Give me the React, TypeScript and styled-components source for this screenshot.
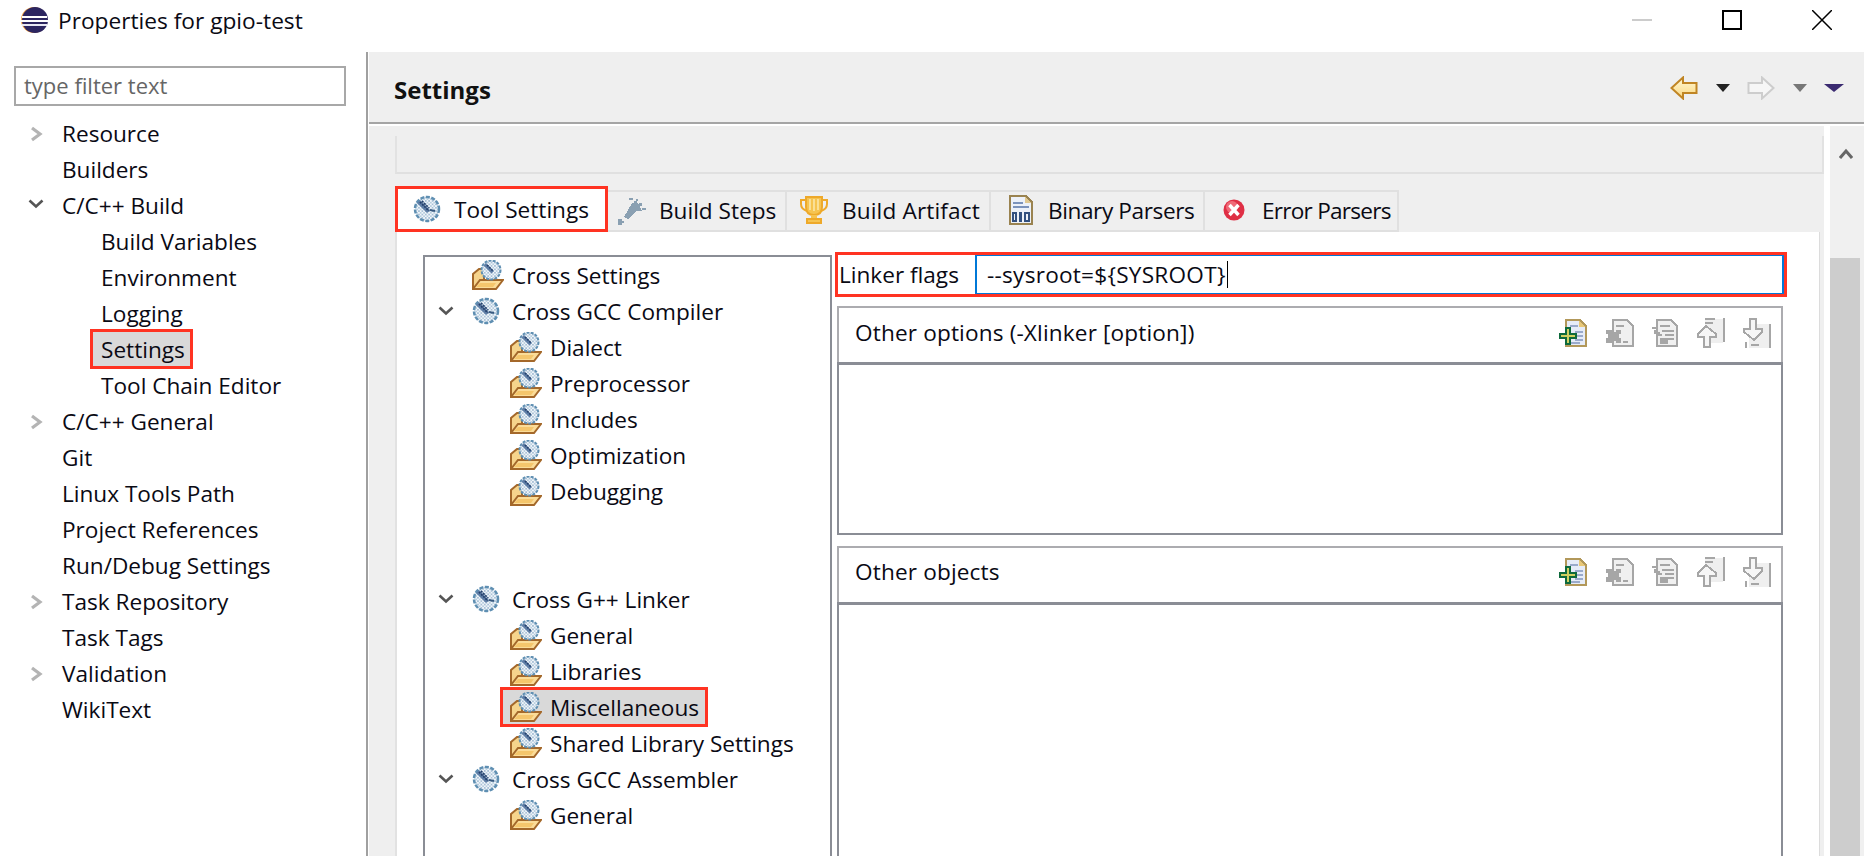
import React from 'react';
import styled, { createGlobalStyle } from 'styled-components';

const Global = createGlobalStyle`
  html, body { margin: 0; padding: 0; background: #fff; }
  body { font-family: "Open Sans", "Noto Sans", sans-serif; font-size: 22.6px; color: #0a0a14; }
  svg { flex: none; }
`;
const RED = '#ff3322';

const Page = styled.div`width:1864px;height:856px;overflow:hidden;display:flex;flex-direction:column;background:#fff;`;
const TitleBar = styled.div`height:52px;flex:none;display:flex;align-items:center;padding:0 32px 12px 20px;box-sizing:border-box;`;
const TitleText = styled.span`margin-left:10px;font-size:22.7px;`;
const WindowButtons = styled.div`margin-left:auto;display:flex;align-items:center;gap:70px;`;
const Body = styled.div`flex:1;display:flex;min-height:0;`;
const Sidebar = styled.aside`width:366px;flex:none;box-sizing:border-box;padding:14px 20px 0 14px;`;
const Divider = styled.div`width:2px;flex:none;background:#a0a0a0;margin-right:1px;`;
const Filter = styled.div`height:40px;box-sizing:border-box;border:2px solid #a8a8a8;color:#666;padding:0 0 2px 8px;display:flex;align-items:center;margin-bottom:9px;font-size:22px;`;
const Row = styled.div<{ $indent: number }>`
  height:36px;display:flex;align-items:center;white-space:nowrap;padding-left:${p => p.$indent}px;position:relative;
`;
const Twisty = styled.span`position:absolute;display:flex;`;
const Chevron = styled(Twisty)<{ $left: number }>`left:${p => p.$left}px;top:11px;`;
const Mark = styled.span<{ $on?: boolean }>`
  display:inline-flex;align-items:center;
  ${p => p.$on && `height:40px;background:#d9d9d9;border:3px solid ${RED};box-sizing:border-box;margin:-2px 0 -2px -11px;padding:0 5px 0 8px;`}
`;
const Main = styled.main`flex:1;min-width:0;display:flex;flex-direction:column;background:#efefef;`;
const Header = styled.header`height:70px;flex:none;box-sizing:border-box;display:flex;align-items:center;padding:2px 20px 0 25px;`;
const HeaderTitle = styled.h1`margin:3px 0 0;font-size:24px;font-weight:700;color:#111;`;
const Nav = styled.div`margin-left:auto;display:flex;align-items:center;gap:17.5px;`;
const Rule = styled.div`height:2px;flex:none;background:#a5a5a5;`;
const WhiteRule = styled.div`height:2px;flex:none;background:#fff;`;
const Workspace = styled.div`flex:1;min-height:0;display:flex;`;
const Pages = styled.div`width:1455px;flex:none;display:flex;flex-direction:column;padding:10px 0 0 26px;box-sizing:border-box;`;
const Strip = styled.div`height:38px;flex:none;box-sizing:border-box;border-left:2px solid #e2e2e2;border-bottom:2px solid #e0e0e0;border-right:2px solid #e2e2e2;margin-bottom:12px;`;
const TabBar = styled.div`height:46px;flex:none;display:flex;margin-right:4px;`;
const Tab = styled.div<{ $w: number; $pad: number; $gap: number; $ls?: number; $sel?: boolean }>`
  width:${p => p.$w}px;flex:none;box-sizing:border-box;display:flex;align-items:center;white-space:nowrap;
  padding-left:${p => p.$pad}px;gap:${p => p.$gap}px;letter-spacing:${p => p.$ls ?? 0}px;
  ${p => p.$sel
    ? `background:#fff;border:3px solid ${RED};`
    : `margin-top:4px;padding-bottom:2px;background:#efefef;border-top:2px solid #e0e0e0;border-bottom:2px solid #e0e0e0;border-right:2px solid #e0e0e0;`}
`;
const TabRest = styled.div`flex:1;`;
const Folder = styled.div`flex:1;min-height:0;display:flex;margin-right:4px;background:#fff;border-left:2px solid #e2e2e2;border-right:1px solid #dcdcdc;padding:20px 0 0 26px;box-sizing:border-box;`;
const TreeBox = styled.div`width:409px;flex:none;box-sizing:border-box;margin-top:3px;border:2px solid #8a8d95;border-bottom:0;`;
const TreeRow = styled.div<{ $level: number }>`height:36px;display:flex;align-items:center;white-space:nowrap;padding-left:${p => (p.$level === 2 ? 85 : 13)}px;position:relative;`;
const TreeTwist = styled.span<{ $x: number }>`width:${p => p.$x}px;flex:none;display:flex;align-items:center;`;
const TreeSpacer = styled.div`height:72px;`;
const Selected = styled.span<{ $on?: boolean }>`
  display:inline-flex;align-items:center;
  ${p => p.$on && `background:#d9d9d9;border:3px solid ${RED};box-sizing:border-box;height:40px;padding:0 6px 0 7px;margin:0 -9px 0 -10px;`}
`;
const TreeLabel = styled.span<{ $wide?: boolean }>`margin-left:${p => (p.$wide ? 12 : 8)}px;`;
const Form = styled.div`margin-left:3px;width:952px;flex:none;display:flex;flex-direction:column;`;
const LinkerRow = styled.div`height:45px;flex:none;box-sizing:border-box;border:3px solid ${RED};display:flex;`;
const LinkerLabel = styled.label`width:137px;flex:none;display:flex;align-items:center;padding-left:1px;box-sizing:border-box;`;
const LinkerInput = styled.div`flex:1;box-sizing:border-box;border:1px solid #0078d7;border-left-width:2px;border-right-width:2px;display:flex;align-items:center;padding-left:10px;letter-spacing:0.25px;`;
const Caret = styled.span`display:inline-block;width:1px;height:27px;background:#000;margin-left:1px;`;
const Section = styled.section<{ $top: number }>`margin:${p => p.$top}px 4px 0 2px;display:flex;flex-direction:column;`;
const SectionHead = styled.div<{ $h: number; $pb: number }>`height:${p => p.$h}px;box-sizing:border-box;border:2px solid #acacb0;border-bottom:0;display:flex;align-items:center;padding:0 10px ${p => p.$pb}px 16px;letter-spacing:0.15px;`;
const Tools = styled.div`margin-left:auto;display:flex;align-items:center;gap:18.5px;`;
const SectionList = styled.div<{ $h: number }>`height:${p => p.$h}px;box-sizing:border-box;border:2px solid #8a8d95;border-top-width:3px;`;
const Scroll = styled.div`flex:1;background:#fff;display:flex;padding-left:6px;`;
const ScrollTrack = styled.div`width:100%;background:#f0f0f0;display:flex;flex-direction:column;`;
const ScrollUp = styled.div`height:132px;flex:none;padding:10px 0 0 9px;box-sizing:border-box;`;
const ScrollThumb = styled.div`flex:1;width:30px;background:#cdcdcd;`;

const ChevRight = () => <svg width="14" height="16" viewBox="0 0 14 16"><path d="M2 2l8 6-8 6" fill="none" stroke="#b4b4b4" strokeWidth="3.2"/></svg>;
const ChevDown = () => <svg width="16" height="12" viewBox="0 0 16 12"><path d="M1.5 2.5L8 8.5l6.5-6" fill="none" stroke="#555" strokeWidth="2.6"/></svg>;

const Eclipse = () => (
  <svg width="28" height="28" viewBox="0 0 28 28"><circle cx="14" cy="14" r="13" fill="#f0a040"/><circle cx="15" cy="14" r="13" fill="#2c2560"/><rect x="2" y="10" width="25" height="2" fill="#fff"/><rect x="1" y="14" width="27" height="2" fill="#fff"/><rect x="2" y="18" width="25" height="2" fill="#e8e8f4"/></svg>
);
const Dither = ({ id }: { id: string }) => (
  <pattern id={id} width="3.4" height="3.4" patternUnits="userSpaceOnUse"><rect width="3.4" height="3.4" fill="#f2f6fa"/><rect width="1.7" height="1.7" fill="#b8cfe0"/><rect x="1.7" y="1.7" width="1.7" height="1.7" fill="#a8c0d6"/></pattern>
);
const Gear = ({ s = 28, id }: { s?: number; id: string }) => (
  <svg width={s} height={s} viewBox="0 0 28 28">
    <defs><Dither id={id}/></defs>
    <circle cx="14" cy="14" r="12" fill={`url(#${id})`} stroke="#5f8fb2" strokeWidth="2.5" strokeDasharray="4 1.5"/>
    <path d="M7 5l10 10-3 3L4 8z" fill="#5f7ea6"/>
    <path d="M7 7l9 9M9 6l7 7" stroke="#24406c" strokeWidth="1.700" strokeDasharray="2 1"/>
    <path d="M17 15l5 1" stroke="#37597f" strokeWidth="2"/>
  </svg>
);
const FolderGear = ({ id }: { id: string }) => (
  <svg width="32" height="30" viewBox="0 0 32 30">
    <defs><Dither id={id}/></defs>
    <path d="M1 29V14l6-5h5v12z" fill="#f6d48c" stroke="#a4682a" strokeWidth="2"/>
    <path d="M1 29l7-9h23l-7 9z" fill="#fbdc98" stroke="#a4682a" strokeWidth="2"/>
    <path d="M4 27h17l3-4H8z" fill="#f5c66c"/>
    <circle cx="19" cy="10" r="9.5" fill={`url(#${id})`} stroke="#5f8fb2" strokeWidth="2" strokeDasharray="3 1.2"/>
    <path d="M14 3l8 8-2.500 2.500-8-8z" fill="#5f7ea6"/>
    <path d="M15 5l6 6" stroke="#24406c" strokeWidth="1.600" strokeDasharray="2 1"/>
  </svg>
);
const BuildSteps = () => (
  <svg width="30" height="30" viewBox="0 0 30 30" shapeRendering="crispEdges">
    <path d="M2 24h4v2h2v2H6v2H2z" fill="#8aa0b2"/>
    <path d="M8 22l8-14h6l4 8h-6l-8 8z" fill="#8aa0b2"/>
    <path d="M13 3h4v2h-4zM18 6h3v2h-3zM23 8h3v3h-3zM26 13h4v2h-4zM20 4h2v2h-2z" fill="#8aa0b2"/>
  </svg>
);
const Trophy = () => (
  <svg width="30" height="30" viewBox="0 0 30 30">
    <path d="M7 2h16v10c0 5-3 8-8 8s-8-3-8-8z" fill="#f6c451" stroke="#eea92a" strokeWidth="2"/>
    <path d="M7 5H2v4c0 4 3 6 6 7M23 5h5v4c0 4-3 6-6 7" fill="none" stroke="#eea92a" strokeWidth="2"/>
    <path d="M11 4v11M15 4v12M19 4v11" stroke="#fce7a8" strokeWidth="1.600"/>
    <path d="M12 20h6v4h-6z" fill="#f6c451"/><path d="M8 24h14v4H8z" fill="#f6c451" stroke="#eea92a" strokeWidth="2"/>
  </svg>
);
const Binary = () => (
  <svg width="24" height="30" viewBox="0 0 24 30" shapeRendering="crispEdges">
    <path d="M1 1h16l6 6v22H1z" fill="#edf1f8" stroke="#9a8350" strokeWidth="2"/>
    <path d="M16 2v6h6z" fill="#e0c890"/>
    <path d="M4 7h10v2H4zM4 11h16v2H4z" fill="#7c93bb"/>
    <path d="M3 17h5v10H3zM10 17h3v10h-3zM15 17h6v10h-6z" fill="#33507f"/>
    <path d="M5 19h1v6H5zM17 19h2v6h-2z" fill="#edf1f8"/>
  </svg>
);
const ErrorIcon = () => (
  <svg width="22" height="22" viewBox="0 0 22 22"><circle cx="11" cy="11" r="10.500" fill="#df2f45"/><circle cx="9" cy="8" r="6" fill="#ef6a78"/><path d="M6.500 6l9 10M15.500 6l-9 10" stroke="#fff" strokeWidth="3.400"/></svg>
);
const Back = () => (
  <svg width="28" height="24" viewBox="0 0 28 24"><defs><linearGradient id="bk" x1="0" x2="0" y1="0" y2="1"><stop offset="0" stopColor="#fff9d8"/><stop offset="1" stopColor="#fbd77e"/></linearGradient></defs><path d="M1.500 12L13 1.500V7h13.500v10H13v5.500z" fill="url(#bk)" stroke="#c08524" strokeWidth="2"/></svg>
);
const Forward = () => (
  <svg width="28" height="24" viewBox="0 0 28 24"><path d="M26.500 12L15 1.500V7H1.500v10H15v5.500z" fill="#f6f6f6" stroke="#cdcdcd" strokeWidth="2"/></svg>
);
const Drop = ({ c, w = 14 }: { c: string; w?: number }) => <svg width={w} height="8" viewBox={`0 0 ${w} 8`}><path d={`M0 0h${w}L${w / 2} 8z`} fill={c}/></svg>;
const Gray = '#a6a6a6';
const AddIcon = () => (
  <svg width="28" height="28" viewBox="0 0 28 28" shapeRendering="crispEdges">
    <path d="M7 1h14l6 6v20H7z" fill="#e6ecf8" stroke="#b2985a" strokeWidth="2"/><path d="M20 2v6h6z" fill="#e8c878"/>
    <path d="M11 6h8v2h-8zM16 12h8v2h-8zM16 16h8v2h-8zM16 20h8v2h-8zM11 23h10v2H11z" fill="#9aaacb"/>
    <path d="M6 8h6v6h6v6h-6v6H6v-6H0v-6h6z" fill="#0e6a3c"/><path d="M8 10h2v6h6v2h-6v6H8v-6H2v-2h6z" fill="#cfd060"/>
  </svg>
);
const DelIcon = () => (
  <svg width="28" height="28" viewBox="0 0 28 28" shapeRendering="crispEdges">
    <path d="M7 1h14l6 6v20H7z" fill="#f0f0f0" stroke={Gray} strokeWidth="2"/><path d="M10 6h8v2h-8zM17 22h5v2h-5z" fill={Gray}/>
    <path d="M0 11h6v2h4v-2h5v4h-2v4h2v5h-5v-2H6v2H0v-5h2v-4H0z" fill={Gray}/>
  </svg>
);
const EditIcon = () => (
  <svg width="26" height="28" viewBox="0 0 26 28" shapeRendering="crispEdges">
    <path d="M5 1h14l6 6v20H5z" fill="#f0f0f0" stroke={Gray} strokeWidth="2"/><path d="M8 6h10v2H8zM0 8h6v2H0zM10 11h12v2H10zM13 15h9v2h-9zM16 19h6v2h-6zM8 19h8v6H8zM2 11h4v2h2v2h2v2H6v-2H2z" fill={Gray}/>
  </svg>
);
const UpIcon = () => (
  <svg width="28" height="30" viewBox="0 0 28 30" shapeRendering="crispEdges">
    <path d="M8 1h18v24H8z" fill="#efefef"/><path d="M26 0h2v24h-2zM8 0h10v2H8zM8 4h8v2H8z" fill={Gray}/>
    <path d="M9 8L1 16v3h6v10h6V19h6v-3z" fill="#f6f6f6" stroke={Gray} strokeWidth="2"/>
  </svg>
);
const DownIcon = () => (
  <svg width="28" height="30" viewBox="0 0 28 30" shapeRendering="crispEdges">
    <path d="M6 6h20v24H6z" fill="#efefef"/><path d="M26 6h2v24h-2zM2 24h2v6H2zM8 26h8v2H8z" fill={Gray}/>
    <path d="M7 1h6v10h6v3l-8 8-10-8v-3h6z" fill="#f6f6f6" stroke={Gray} strokeWidth="2"/>
  </svg>
);
const ToolGroup = () => <Tools><AddIcon/><DelIcon/><EditIcon/><UpIcon/><DownIcon/></Tools>;

type SideItem = { t: string; lvl: 0 | 1; ch?: 'r' | 'd'; mark?: boolean };
const side: SideItem[] = [
  { t: 'Resource', lvl: 0, ch: 'r' }, { t: 'Builders', lvl: 0 }, { t: 'C/C++ Build', lvl: 0, ch: 'd' },
  { t: 'Build Variables', lvl: 1 }, { t: 'Environment', lvl: 1 }, { t: 'Logging', lvl: 1 },
  { t: 'Settings', lvl: 1, mark: true }, { t: 'Tool Chain Editor', lvl: 1 }, { t: 'C/C++ General', lvl: 0, ch: 'r' },
  { t: 'Git', lvl: 0 }, { t: 'Linux Tools Path', lvl: 0 }, { t: 'Project References', lvl: 0 },
  { t: 'Run/Debug Settings', lvl: 0 }, { t: 'Task Repository', lvl: 0, ch: 'r' }, { t: 'Task Tags', lvl: 0 },
  { t: 'Validation', lvl: 0, ch: 'r' }, { t: 'WikiText', lvl: 0 },
];
type TreeItem = { t: string; lvl: 1 | 2; group?: boolean; mark?: boolean };
const treeA: TreeItem[] = [
  { t: 'Cross Settings', lvl: 1 }, { t: 'Cross GCC Compiler', lvl: 1, group: true }, { t: 'Dialect', lvl: 2 },
  { t: 'Preprocessor', lvl: 2 }, { t: 'Includes', lvl: 2 }, { t: 'Optimization', lvl: 2 }, { t: 'Debugging', lvl: 2 },
];
const treeB: TreeItem[] = [
  { t: 'Cross G++ Linker', lvl: 1, group: true }, { t: 'General', lvl: 2 }, { t: 'Libraries', lvl: 2 },
  { t: 'Miscellaneous', lvl: 2, mark: true }, { t: 'Shared Library Settings', lvl: 2 },
  { t: 'Cross GCC Assembler', lvl: 1, group: true }, { t: 'General', lvl: 2 },
];
const Node = ({ it, id }: { it: TreeItem; id: string }) => (
  <TreeRow $level={it.lvl}>
    {it.lvl === 1 && <TreeTwist $x={34}>{it.group && <ChevDown/>}</TreeTwist>}
    <Selected $on={it.mark}>
      {it.group ? <Gear id={id}/> : <FolderGear id={id}/>}
      <TreeLabel $wide={it.group}>{it.t}</TreeLabel>
    </Selected>
  </TreeRow>
);

export default function App() {
  return (
    <Page>
      <Global/>
      <TitleBar>
        <Eclipse/>
        <TitleText>Properties for gpio-test</TitleText>
        <WindowButtons>
          <svg width="20" height="2"><rect width="20" height="2" fill="#ccc"/></svg>
          <svg width="20" height="20"><rect x="1" y="1" width="18" height="18" fill="none" stroke="#000" strokeWidth="2"/></svg>
          <svg width="20" height="20"><path d="M0 0l20 20M20 0L0 20" stroke="#000" strokeWidth="1.500"/></svg>
        </WindowButtons>
      </TitleBar>
      <Body>
        <Sidebar>
          <Filter>type filter text</Filter>
          {side.map(s => (
            <Row key={s.t} $indent={s.lvl ? 87 : 48}>
              {s.ch === 'r' && <Chevron $left={16}><ChevRight/></Chevron>}
              {s.ch === 'd' && <Chevron $left={14}><ChevDown/></Chevron>}
              <Mark $on={s.mark}>{s.t}</Mark>
            </Row>
          ))}
        </Sidebar>
        <Divider/>
        <Main>
          <Header>
            <HeaderTitle>Settings</HeaderTitle>
            <Nav>
              <Back/><Drop c="#222"/><Forward/><Drop c="#777"/><Drop c="#3a2a70" w={20}/>
            </Nav>
          </Header>
          <Rule/>
          <WhiteRule/>
          <Workspace>
            <Pages>
              <Strip/>
              <TabBar>
                <Tab $w={213} $pad={15} $gap={13} $sel><Gear id="t0"/>Tool Settings</Tab>
                <Tab $w={179} $pad={8} $gap={13}><BuildSteps/>Build Steps</Tab>
                <Tab $w={204} $pad={12} $gap={13} $ls={0.15}><Trophy/>Build Artifact</Tab>
                <Tab $w={214} $pad={18} $gap={15} $ls={-0.4}><Binary/>Binary Parsers</Tab>
                <Tab $w={194} $pad={18} $gap={17} $ls={-0.75}><ErrorIcon/>Error Parsers</Tab>
                <TabRest/>
              </TabBar>
              <Folder>
                <TreeBox>
                  {treeA.map((it, i) => <Node key={it.t} it={it} id={`a${i}`}/>)}
                  <TreeSpacer/>
                  {treeB.map((it, i) => <Node key={it.t + i} it={it} id={`b${i}`}/>)}
                </TreeBox>
                <Form>
                  <LinkerRow>
                    <LinkerLabel>Linker flags</LinkerLabel>
                    <LinkerInput>--sysroot=${'{'}SYSROOT{'}'}<Caret/></LinkerInput>
                  </LinkerRow>
                  <Section $top={9}>
                    <SectionHead $h={56} $pb={5}>Other options (-Xlinker [option])<ToolGroup/></SectionHead>
                    <SectionList $h={173}/>
                  </Section>
                  <Section $top={11}>
                    <SectionHead $h={56} $pb={7}>Other objects<ToolGroup/></SectionHead>
                    <SectionList $h={300}/>
                  </Section>
                </Form>
              </Folder>
            </Pages>
            <Scroll>
              <ScrollTrack>
                <ScrollUp><svg width="14" height="12" viewBox="0 0 14 12"><path d="M1 10l6-7 6 7" fill="none" stroke="#666" strokeWidth="3"/></svg></ScrollUp>
                <ScrollThumb/>
              </ScrollTrack>
            </Scroll>
          </Workspace>
        </Main>
      </Body>
    </Page>
  );
}
